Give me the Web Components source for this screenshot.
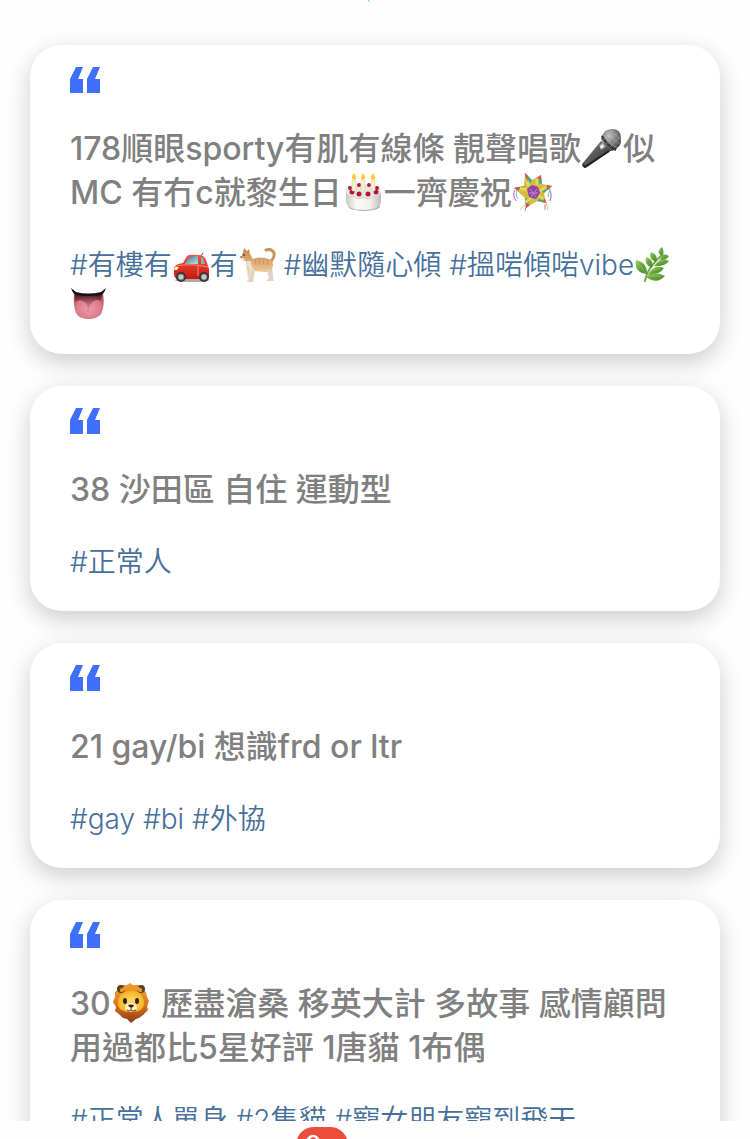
<!DOCTYPE html>
<html lang="zh-HK">
<head>
<meta charset="utf-8">
<meta name="viewport" content="width=device-width, initial-scale=1">
<title>Feed</title>
<style>
  body {
    margin: 0;
    background: #fefefe;
    font-family: Inter, "Noto Sans CJK TC", sans-serif;
  }
</style>
</head>
<body>
<quote-feed>
  <quote-card>
    178順眼sporty有肌有線條 靚聲唱歌<emoji-icon name="mic"></emoji-icon>似 MC 有冇c就黎生日<emoji-icon name="cake"></emoji-icon>一齊慶祝<emoji-icon name="pinata"></emoji-icon>
    <span slot="tags"><hash-tag>#有樓有<emoji-icon name="car"></emoji-icon>有<emoji-icon name="cat"></emoji-icon></hash-tag> <hash-tag>#幽默隨心傾</hash-tag> <hash-tag>#搵啱傾啱vibe<emoji-icon name="herb"></emoji-icon><emoji-icon name="tongue"></emoji-icon></hash-tag></span>
  </quote-card>
  <quote-card>
    38 沙田區 自住 運動型
    <span slot="tags"><hash-tag>#正常人</hash-tag></span>
  </quote-card>
  <quote-card>
    21 gay/bi 想識frd or ltr
    <span slot="tags"><hash-tag>#gay</hash-tag> <hash-tag>#bi</hash-tag> <hash-tag>#外協</hash-tag></span>
  </quote-card>
  <quote-card>
    30<emoji-icon name="lion"></emoji-icon> 歷盡滄桑 移英大計 多故事 感情顧問 用過都比5星好評 1唐貓 1布偶
    <span slot="tags"><hash-tag>#正常人單身</hash-tag> <hash-tag>#2隻貓</hash-tag> <hash-tag>#寵女朋友寵到飛天</hash-tag></span>
  </quote-card>
  <tab-bar slot="footer" count="9+"></tab-bar>
</quote-feed>

<script>
(function () {
  function createTemplate(html) {
    const template = document.createElement('template');
    template.innerHTML = html;
    return template;
  }

  // text emoji, drawn on a 42x40 canvas in titles and 38x36 in tags
  const icons = {
    mic: ['🎤', 42, 40, `
      <defs>
        <linearGradient id="h" x1="0" y1="0" x2="1" y2="1"><stop stop-color="#888"/><stop offset=".5" stop-color="#555"/><stop offset="1" stop-color="#222"/></linearGradient>
        <radialGradient id="g" cx=".4" cy=".3" r=".8"><stop stop-color="#c4c4c4"/><stop offset=".5" stop-color="#777"/><stop offset="1" stop-color="#333"/></radialGradient>
      </defs>
      <path d="M20 13L31 22L6 39Q2 41 1 36Z" fill="url(#h)"/>
      <path d="M2 37L4 39L28 23" fill="none" stroke="#222" stroke-width="2"/>
      <path d="M20 11Q22 1 31 1Q40 1 40 10Q41 20 31 23Q27 20 24 18Z" fill="url(#g)"/>
      <path d="M21 8Q26 18 35 22" fill="none" stroke="#333" stroke-width="2"/>
      <path d="M23 7Q28 16 37 20M26 4L38 16M30 2L40 12M22 12L31 2M25 16L37 4M29 19L40 8" fill="none" stroke="#bbb" stroke-width="1" opacity=".45"/>
      <path d="M18 17L22 14L25 19L20 22Z" fill="#999"/>
      <path d="M19 18L22 16L23 19L20 21Z" fill="#eee"/>`],
    cake: ['🎂', 42, 40, `
      <defs><linearGradient id="b"><stop stop-color="#c9c8c0"/><stop offset=".3" stop-color="#fbfbf7"/><stop offset=".7" stop-color="#f1f0ec"/><stop offset="1" stop-color="#bcbbb5"/></linearGradient></defs>
      <ellipse cx="22" cy="34" rx="16" ry="5" fill="#aaa8a0"/>
      <path d="M4 19V29Q4 38 22 38Q39 38 39 29V19Z" fill="url(#b)"/>
      <ellipse cx="21.500" cy="19" rx="17.500" ry="7" fill="#e9e7e1"/>
      <path d="M4 22Q7 27 11 24Q16 29 21 25Q27 29 32 24Q37 27 39 21" fill="none" stroke="#d0cec6" stroke-width="1"/>
      <g fill="#b51638"><circle cx="17" cy="13" r="2"/><circle cx="27" cy="13" r="2"/><circle cx="8" cy="16" r="2"/><circle cx="35" cy="16" r="2"/><circle cx="10" cy="20" r="2.500"/><circle cx="17" cy="22" r="2.500"/><circle cx="26" cy="22" r="2.500"/><circle cx="34" cy="20" r="2.500"/></g>
      <g fill="#f5efcf" stroke="#cfc6a2" stroke-width=".5"><rect x="10" y="8" width="4" height="11" rx="1"/><rect x="19" y="8" width="4" height="12" rx="1"/><rect x="29" y="8" width="4" height="11" rx="1"/></g>
      <g fill="#ffc928"><path d="M12 1Q8 7 12 8Q16 7 12 1Z"/><path d="M21 1Q17 7 21 8Q25 7 21 1Z"/><path d="M31 1Q27 7 31 8Q35 7 31 1Z"/></g>`],
    pinata: ['🪅', 42, 40, `
      <g fill="none" stroke-width="1"><path d="M3 18Q0 23 4 29M36 16Q41 21 38 29" stroke="#c04cdf"/><path d="M5 18Q3 24 6 27M38 16L36 25" stroke="#62cda0"/><path d="M14 32Q10 35 8 38M34 30L36 38" stroke="#b7db43"/><path d="M14 34L13 39M33 32L33 38" stroke="#d269d6"/></g>
      <path d="M13 1L20 8L29 3L30 12L40 14L32 21L34 31L25 29L14 36L13 26L2 16L12 14Z" fill="#d9b843"/>
      <path d="M13 1L20 8L17 13ZM29 3L30 12L24 11ZM2 16L12 14L14 18ZM40 14L32 21L28 18ZM34 31L25 29L29 25ZM14 36L13 26L19 27Z" fill="#43ad88"/>
      <path d="M13 1L16 4L14 7ZM29 3L29 8L25 6ZM2 16L7 15L7 19ZM40 14L35 13L35 18ZM34 31L31 30L33 26ZM14 36L14 31L18 33Z" fill="#dc4964"/>
      <path d="M15 9L17 14M25 7L25 13M8 16L15 18M34 15L28 19M31 27L27 24M14 30L19 26" stroke="#e8d653" stroke-width="3"/>
      <path d="M15 17L20 13L26 15L28 21L24 27L17 25Z" fill="#8e43a5"/>
      <path d="M18 17L24 25M25 17L19 25M17 21H26" stroke="#c58acb" stroke-width="1"/>`],
    lion: ['🦁', 42, 40, `
      <defs><linearGradient id="m" x2="0" y2="1"><stop stop-color="#f5a52b"/><stop offset=".55" stop-color="#d9751d"/><stop offset="1" stop-color="#8e3819"/></linearGradient><radialGradient id="f"><stop stop-color="#ffe06b"/><stop offset="1" stop-color="#f5b428"/></radialGradient></defs>
      <path d="M19 0L22 2L28 2L31 6L35 9L36 14L38 18L36 23L37 27L32 32L28 35L25 36L20 40L16 36L12 35L9 32L4 28L5 24L2 19L4 14L4 9L8 6L11 2L16 2Z" fill="url(#m)"/>
      <circle cx="10" cy="6" r="4" fill="#5b4320"/><circle cx="30" cy="6" r="4" fill="#5b4320"/><circle cx="11" cy="7" r="2" fill="#dcaa4b"/><circle cx="29" cy="7" r="2" fill="#dcaa4b"/>
      <path d="M12 4Q20 0 28 4L31 9Q20 4 9 9Z" fill="#ee9828"/>
      <path d="M7 19Q8 8 20 8Q32 8 33 19Q34 29 20 29Q6 29 7 19Z" fill="url(#f)"/>
      <path d="M14 26Q14 20 20 20Q26 20 26 26Q20 31 14 26Z" fill="#fff2cd"/>
      <ellipse cx="14" cy="18" rx="2" ry="3" fill="#322114"/><ellipse cx="26" cy="18" rx="2" ry="3" fill="#322114"/>
      <path d="M17 22Q20 21 23 22Q23 24 20 25Q18 24 17 22Z" fill="#382015"/>
      <path d="M20 25V27M16 27Q19 29 20 27Q22 29 25 27" fill="none" stroke="#674026" stroke-width="1"/>`],
    car: ['🚗', 38, 36, `
      <defs><linearGradient id="r" x2="0" y2="1"><stop stop-color="#fa523e"/><stop offset="1" stop-color="#c51710"/></linearGradient><linearGradient id="w" x2="1" y2="1"><stop stop-color="#426f80"/><stop offset="1" stop-color="#b4e8f2"/></linearGradient></defs>
      <path d="M29 9L31 6" stroke="#555"/>
      <ellipse cx="20" cy="33" rx="17" ry="2" fill="#aaa"/>
      <path d="M2 21Q3 17 11 16L15 9Q17 7 27 8Q32 8 34 13L37 22V29Q36 32 31 32H7Q2 32 2 27Z" fill="url(#r)"/>
      <path d="M13 17L17 10Q20 9 26 9L26 17Z" fill="url(#w)"/><path d="M29 10Q31 10 32 14L33 17H29Z" fill="#70bac8"/>
      <path d="M3 20Q7 17 25 18L36 20M26 18V29" fill="none" stroke="#ff8a74"/>
      <path d="M3 20L7 20L5 23H2Z" fill="#fff0c0"/>
      <g fill="#333"><circle cx="9" cy="30" r="5"/><circle cx="32" cy="30" r="5"/></g>
      <g fill="#c9c9c9" stroke="#777"><circle cx="9" cy="30" r="3"/><circle cx="32" cy="30" r="3"/></g>`],
    cat: ['🐈', 38, 36, `
      <defs><linearGradient id="c" x2="0" y2="1"><stop stop-color="#c88951"/><stop offset=".6" stop-color="#e9bd86"/><stop offset="1" stop-color="#f8eddd"/></linearGradient></defs>
      <path d="M31 16Q37 11 36 6Q34 1 28 3" fill="none" stroke="#cb925f" stroke-width="3" stroke-linecap="round"/>
      <path d="M5 5L6 1L9 4L11 2L12 7L15 12Q22 9 31 12Q37 15 34 22L36 34H32L30 25Q22 25 17 24L15 35H8L10 32L9 21Q8 17 8 14Q4 15 3 11Z" fill="url(#c)"/>
      <path d="M8 14Q9 20 11 22V33L8 35H14L17 24Q13 20 13 14Z" fill="#e9e0d4"/>
      <path d="M16 24L15 35H11L13 23ZM29 23L31 31L28 34H35L33 22Z" fill="#ddd2c4"/>
      <path d="M17 12L18 18M21 12L22 18M25 12L26 18M29 13L30 18M7 4L8 7" stroke="#cf935c" stroke-width="1"/>
      <path d="M3 10L7 13L5 14Z" fill="#fff"/><circle cx="6" cy="8" r="1" fill="#54452b"/><circle cx="3" cy="10" r="1" fill="#b46c5c"/>`],
    herb: ['🌿', 38, 36, `
      <defs><linearGradient id="l" x2="1" y2="1"><stop stop-color="#9fcb65"/><stop offset=".5" stop-color="#65a33c"/><stop offset="1" stop-color="#3f8a2c"/></linearGradient></defs>
      <path d="M11 35Q12 22 29 7" fill="none" stroke="#7da64f" stroke-width="2"/>
      <g fill="url(#l)"><path d="M28 9Q21 5 28 0Q31 5 28 9Z"/><path d="M27 10Q28 5 35 9Q32 14 26 13Z"/><path d="M22 15Q14 12 17 5Q25 8 22 15Z"/><path d="M22 17Q27 10 35 14Q31 20 20 19Z"/><path d="M13 27Q0 26 2 13Q13 15 13 27Z"/><path d="M18 21Q10 18 12 10Q20 12 18 21Z"/><path d="M16 25Q21 17 30 21Q26 28 14 28Z"/><path d="M12 30Q21 23 31 29Q23 38 12 30Z"/></g>
      <path d="M4 16L12 26M16 29H27M19 23L26 21M26 15L32 12" stroke="#a2cc70" stroke-width=".5"/>`],
    tongue: ['👅', 38, 36, `
      <defs><radialGradient id="t" cx=".5" cy=".6" r=".6"><stop stop-color="#ec9eaa"/><stop offset=".7" stop-color="#db7889"/><stop offset="1" stop-color="#b64d61"/></radialGradient><linearGradient id="s" x2="0" y2="1"><stop stop-color="#39181d"/><stop offset="1" stop-color="#a6455b" stop-opacity="0"/></linearGradient></defs>
      <path d="M4 6Q18 10 33 6Q35 20 31 27Q27 32 19 32Q9 32 6 26Q3 18 4 6Z" fill="url(#t)"/>
      <path d="M5 7Q18 9 32 7L31 14Q22 10 19 23Q15 10 5 15Z" fill="url(#s)"/>
      <path d="M1 1L6 5Q18 8 31 5L36 1Q34 7 31 8Q18 10 6 8Q3 7 1 1Z" fill="#171313"/>
      <path d="M18 13V25" stroke="#b75268" opacity=".5"/>`]
  };

  class EmojiIcon extends HTMLElement {
    constructor() {
      super();
      this.attachShadow({ mode: 'open' });
    }

    // no white space round the svg: it would show as a gap in the text
    connectedCallback() {
      const [label, width, height, shapes] = icons[this.getAttribute('name')];
      this.shadowRoot.innerHTML = `<style>
          :host { display: inline; }
          svg { display: inline-block; vertical-align: -8px; }
        </style><svg role="img" aria-label="${label}" width="${width}" height="${height}" viewBox="0 0 ${width} ${height}">${shapes}</svg>`;
    }
  }

  const tagTemplate = createTemplate(`<style>
      :host { display: inline; }
      a { color: inherit; text-decoration: none; }
    </style><a href="#"><slot></slot></a>`);

  class HashTag extends HTMLElement {
    constructor() {
      super();
      this.attachShadow({ mode: 'open' }).appendChild(tagTemplate.content.cloneNode(true));
    }
  }

  const cardTemplate = createTemplate(`
    <style>
      :host {
        display: block;
        padding: 22px 40px 29px;
        border-radius: 32px;
        background: #fff;
        box-shadow: 0 8px 24px rgba(0, 0, 0, 0.2);
      }
      .mark {
        display: block;
        margin-bottom: 34px;
        fill: #3f6ffb;
      }
      h2 {
        margin: 0 0 30px;
        font-size: 32px;
        font-weight: 500;
        line-height: 44px;
        color: #808080;
      }
      .tags {
        margin: 0;
        font-size: 28px;
        font-weight: 350;
        line-height: 40px;
        color: #466f9b;
      }
    </style>
    <svg class="mark" width="30" height="26" viewBox="0 0 30 26" aria-hidden="true">
      <path d="M6 0H13L8 12H13V26H0V12ZM23 0H30L25 12H30V26H17V12Z"/>
    </svg>
    <h2><slot></slot></h2>
    <p class="tags"><slot name="tags"></slot></p>
  `);

  class QuoteCard extends HTMLElement {
    constructor() {
      super();
      this.attachShadow({ mode: 'open' }).appendChild(cardTemplate.content.cloneNode(true));
    }
  }

  const barTemplate = createTemplate(`
    <style>
      :host {
        display: flex;
        justify-content: center;
        box-sizing: border-box;
        height: 18px;
        padding: 6px 106px 0 0;
        overflow: hidden;
        background: #fefefe;
      }
      .badge {
        flex: none;
        box-sizing: border-box;
        min-width: 52px;
        height: 36px;
        border-radius: 18px;
        background: #eb4d3d;
        color: #fff;
        font-size: 26px;
        line-height: 36px;
        text-align: center;
      }
    </style>
    <span class="badge"></span>
  `);

  class TabBar extends HTMLElement {
    constructor() {
      super();
      this.attachShadow({ mode: 'open' }).appendChild(barTemplate.content.cloneNode(true));
    }

    connectedCallback() {
      this.shadowRoot.querySelector('.badge').textContent = this.getAttribute('count');
    }
  }

  const feedTemplate = createTemplate(`
    <style>
      :host {
        display: flex;
        flex-direction: column;
        height: 100vh;
      }
      header {
        display: flex;
        justify-content: center;
        height: 45px;
      }
      main {
        flex: 1;
        min-height: 0;
        overflow-y: auto;
        scrollbar-width: none;
      }
      .list {
        display: flex;
        flex-direction: column;
        gap: 32px;
        padding: 0 30px 32px;
      }
    </style>
    <main>
      <header>
        <svg width="16" height="2" aria-hidden="true"><path d="M1 0h1v1h1v1h-1v-1h-1z" fill="#48e4cf"/></svg>
      </header>
      <div class="list"><slot></slot></div>
    </main>
    <slot name="footer"></slot>
  `);

  class QuoteFeed extends HTMLElement {
    constructor() {
      super();
      this.attachShadow({ mode: 'open' }).appendChild(feedTemplate.content.cloneNode(true));
    }
  }

  window.customElements.define('emoji-icon', EmojiIcon);
  window.customElements.define('hash-tag', HashTag);
  window.customElements.define('quote-card', QuoteCard);
  window.customElements.define('tab-bar', TabBar);
  window.customElements.define('quote-feed', QuoteFeed);
})()
</script>
</body>
</html>
